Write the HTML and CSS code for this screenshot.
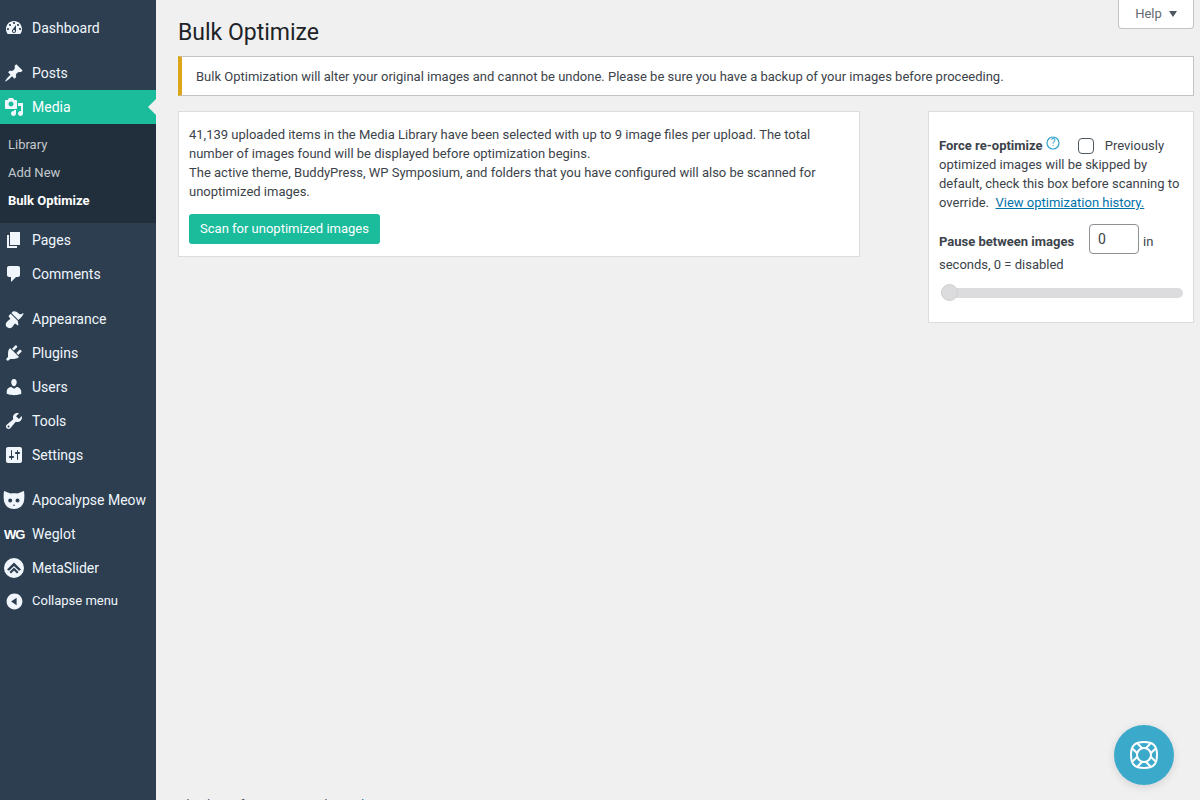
FILE: index.html
```html
<!DOCTYPE html>
<html lang="en">
<head>
<meta charset="utf-8">
<title>Bulk Optimize</title>
<link rel="stylesheet" href="styles.css">
</head>
<body>
<div class="app">
  <nav class="sidebar">
    <ul class="menu">
      <li class="item"><svg class="ico" viewBox="0 0 20 20"><path fill-rule="evenodd" d="M3.76 16h12.48c1.1-1.37 1.76-3.11 1.76-5 0-4.42-3.58-8-8-8s-8 3.58-8 8c0 1.89.66 3.63 1.76 5zM10 4c.55 0 1 .45 1 1s-.45 1-1 1-1-.45-1-1 .45-1 1-1zM6 6c.55 0 1 .45 1 1s-.45 1-1 1-1-.45-1-1 .45-1 1-1zm8 0c.55 0 1 .45 1 1s-.45 1-1 1-1-.45-1-1 .45-1 1-1zm-5.37 5.55L12 7v6c0 1.1-.9 2-2 2s-2-.9-2-2c0-.57.24-1.08.63-1.45zM4 10c.55 0 1 .45 1 1s-.45 1-1 1-1-.45-1-1 .45-1 1-1zm12 0c.55 0 1 .45 1 1s-.45 1-1 1-1-.45-1-1 .45-1 1-1zm-5 3c0-.55-.45-1-1-1s-1 .45-1 1 .45 1 1 1 1-.45 1-1z"/></svg><span>Dashboard</span></li>
      <li class="item sep"><svg class="ico" viewBox="0 0 20 20"><path d="M10.44 3.02l1.82-1.82 6.36 6.35-1.83 1.82c-1.05-.68-2.48-.57-3.41.36l-.75.75c-.92.93-1.04 2.35-.35 3.41l-1.83 1.82-2.41-2.41-2.8 2.79c-.42.42-3.38 2.71-3.8 2.29s1.86-3.39 2.28-3.81l2.79-2.79L4.1 9.36l1.83-1.82c1.05.69 2.48.57 3.4-.36l.75-.75c.93-.92 1.05-2.35.36-3.41z"/></svg><span>Posts</span></li>
      <li class="item current"><svg class="ico" viewBox="0 0 20 20"><path fill-rule="evenodd" d="M13 11V4c0-.55-.45-1-1-1h-1.67L9 1H5L3.67 3H2c-.55 0-1 .45-1 1v7c0 .55.45 1 1 1h10c.55 0 1-.45 1-1zM7 4.5c1.38 0 2.5 1.12 2.5 2.5S8.38 9.5 7 9.5 4.5 8.38 4.5 7 5.62 4.5 7 4.5zM14 6h5v10.5c0 1.38-1.12 2.5-2.5 2.5S14 17.88 14 16.5s1.12-2.5 2.5-2.5c.17 0 .34.02.5.05V9h-3V6zm-4 8.05V13h2v3.5c0 1.38-1.12 2.5-2.5 2.5S7 17.88 7 16.5 8.12 14 9.5 14c.17 0 .34.02.5.05z"/></svg><span>Media</span></li>
      <li class="submenu">
        <a class="subitem">Library</a>
        <a class="subitem">Add New</a>
        <a class="subitem active">Bulk Optimize</a>
      </li>
      <li class="item"><svg class="ico" viewBox="0 0 20 20"><path d="M6 15V2h10v13H6zm-1 1h8v2H3V5h2v11z"/></svg><span>Pages</span></li>
      <li class="item"><svg class="ico" viewBox="0 0 20 20"><path d="M5 2h9c1.1 0 2 .9 2 2v7c0 1.1-.9 2-2 2h-2l-5 5v-5H5c-1.1 0-2-.9-2-2V4c0-1.1.9-2 2-2z"/></svg><span>Comments</span></li>
      <li class="item sep"><svg class="ico" viewBox="0 0 20 20"><path d="M14.48 11.06L7.41 3.99l1.5-1.5c.5-.56 2.3-.47 3.51.32 1.21.8 1.43 1.28 2.91 2.1 1.18.64 2.45.32 3.44-.55.44-.39.94.04.57.77-.78 1.52-2.56 3.93-4.96 5.93zm-.71.71L6.7 4.7 4.93 6.47c-.39.39-.39 1.02 0 1.41l1.06 1.06c.39.39.39 1.03 0 1.42-.6.6-1.43 1.11-2.21 1.69-.35.26-.7.53-1.01.84-1.43 1.43-1.4 3.75.05 5.2 1.44 1.44 3.77 1.48 5.2.05.31-.31.58-.66.84-1.01.58-.78 1.09-1.61 1.69-2.21.39-.39 1.02-.39 1.41 0l1.06 1.06c.39.39 1.02.39 1.41 0z"/></svg><span>Appearance</span></li>
      <li class="item"><svg class="ico" viewBox="0 0 20 20"><path d="M13.11 4.36L9.87 7.6 8 5.73l3.24-3.24c.35-.34 1.05-.2 1.56.32.52.51.66 1.21.31 1.55zm-8 1.77l.91-1.12 9.01 9.01-1.19.84c-.71.71-2.63 1.16-3.82 1.16H6.14L4.9 17.26c-.59.59-1.54.59-2.12 0-.59-.58-.59-1.53 0-2.12l1.24-1.24v-3.88c0-1.13.4-3.19 1.09-3.89zm7.26 3.97l3.24-3.24c.34-.35 1.04-.21 1.55.31.52.51.66 1.21.31 1.55l-3.24 3.25z"/></svg><span>Plugins</span></li>
      <li class="item"><svg class="ico" viewBox="0 0 20 20"><path d="M10 9.25c-2.27 0-2.73-3.44-2.73-3.44C7 4.02 7.82 2 9.97 2c2.16 0 2.98 2.02 2.71 3.81 0 0-.41 3.44-2.68 3.44zm0 2.57L12.72 10c2.39 0 4.52 2.33 4.52 4.53v2.49s-3.65 1.13-7.24 1.13c-3.65 0-7.24-1.13-7.24-1.13v-2.49c0-2.25 1.94-4.48 4.47-4.48z"/></svg><span>Users</span></li>
      <li class="item"><svg class="ico" viewBox="0 0 20 20"><path fill-rule="evenodd" d="M16.68 9.77c-1.34 1.34-3.3 1.67-4.95.99l-5.41 6.52c-.99.99-2.59.99-3.58 0s-.99-2.59 0-3.57l6.52-5.42c-.68-1.65-.35-3.61.99-4.95 1.28-1.28 3.12-1.62 4.72-1.06l-2.89 2.89 2.82 2.82 2.86-2.87c.53 1.58.18 3.39-1.08 4.65zM3.81 16.21c.4.39 1.04.39 1.43 0 .4-.4.4-1.04 0-1.43-.39-.4-1.03-.4-1.43 0-.39.39-.39 1.03 0 1.43z"/></svg><span>Tools</span></li>
      <li class="item"><svg class="ico" viewBox="0 0 20 20"><path fill-rule="evenodd" d="M18 16V4c0-1.1-.9-2-2-2H4c-1.1 0-2 .9-2 2v12c0 1.1.9 2 2 2h12c1.1 0 2-.9 2-2zM8 11h1c.55 0 1 .45 1 1s-.45 1-1 1H8v1.5c0 .28-.22.5-.5.5s-.5-.22-.5-.5V13H6c-.55 0-1-.45-1-1s.45-1 1-1h1V5.5c0-.28.22-.5.5-.5s.5.22.5.5V11zm5-2h-1c-.55 0-1-.45-1-1s.45-1 1-1h1V5.5c0-.28.22-.5.5-.5s.5.22.5.5V7h1c.55 0 1 .45 1 1s-.45 1-1 1h-1v5.5c0 .28-.22.5-.5.5s-.5-.22-.5-.5V9z"/></svg><span>Settings</span></li>
      <li class="item sep"><svg class="ico ico-cat" viewBox="0 0 22 20"><path fill-rule="evenodd" d="M1 1C4 2 6 3 7.500 3.500 9.500 3 12.500 3 14.500 3.500 16 3 18 2 21 1 21.500 5 21.500 8 21 11 20 16 16 19 11 19 6 19 2 16 1 11 .5 8 .5 5 1 1zM7.200 8.500a2 2 0 1 0 0 4 2 2 0 0 0 0-4zM14.500 8.500a2 2 0 1 0 0 4 2 2 0 0 0 0-4zM11 14.500a.8.8 0 1 0 0 1.600.8.8 0 0 0 0-1.600z"/></svg><span>Apocalypse Meow</span></li>
      <li class="item"><span class="wg">WG</span><span>Weglot</span></li>
      <li class="item"><svg class="ico" viewBox="0 0 20 20"><path fill-rule="evenodd" d="M10 0a10 10 0 1 0 0 20A10 10 0 0 0 10 0zM10 4.500l7 7-2 1.300-5-4.800-5 4.800-2-1.300zM10 9.500l4.500 4.500-1.500 1.500-3-3-3 3L5.500 14z"/></svg><span>MetaSlider</span></li>
      <li class="item collapse"><svg class="ico ico-small" viewBox="0 0 20 20"><path fill-rule="evenodd" d="M10 .7C4.870.7.7 4.870.7 10s4.170 9.300 9.300 9.300 9.300-4.170 9.300-9.300S15.130.7 10 .7zM12.500 14.500L6 10l6.500-4.500z"/></svg><span>Collapse menu</span></li>
    </ul>
  </nav>
  <main class="main">
    <a class="help-tab">Help <i class="caret"></i></a>
    <h1 class="title">Bulk Optimize</h1>
    <div class="notice">Bulk Optimization will alter your original images and cannot be undone. Please be sure you have a backup of your images before proceeding.</div>
    <div class="columns">
      <section class="panel panel-main">
        <p class="intro">41,139 uploaded items in the Media Library have been selected with up to 9 image files per upload. The total number of images found will be displayed before optimization begins.<br>The active theme, BuddyPress, WP Symposium, and folders that you have configured will also be scanned for unoptimized images.</p>
        <button class="scan" type="button">Scan for unoptimized images</button>
      </section>
      <aside class="panel panel-side">
        <p class="opt"><b class="label">Force re-optimize</b> <svg class="q" viewBox="0 0 14 14"><circle cx="7" cy="7" r="6" fill="none" stroke="#2ea2cc" stroke-width="1.200"/><text x="7" y="10.300" text-anchor="middle">?</text></svg><span class="check"></span>Previously optimized images will be skipped by default, check this box before scanning to override. &nbsp;<a class="link">View optimization history.</a></p>
        <p class="opt pause"><b class="label">Pause between images</b><span class="num">0</span>in seconds, 0 = disabled</p>
        <div class="slider"><span class="thumb"></span></div>
      </aside>
    </div>
    <footer class="foot">Thank you for creating with <a class="foot-link">WordPress</a>.</footer>
  </main>
</div>
<div class="support"><svg viewBox="0 0 32 32" width="32" height="32"><g fill="none" stroke="#fff" stroke-width="2"><circle cx="16" cy="16" r="7"/><path d="M16 3C20 3 24 4 26 6S29 12 29 16 28 24 26 26 20 29 16 29 8 28 6 26 3 20 3 16 4 8 6 6 12 3 16 3z"/><path transform="translate(16 16)" d="M6.800-1.800L11.300-6.300M1.800-6.800L6.300-11.300M6.800 1.800L11.300 6.300M1.800 6.800L6.300 11.300M-6.800 1.800L-11.300 6.300M-1.800 6.800L-6.300 11.300M-6.800-1.800L-11.300-6.300M-1.800-6.800L-6.300-11.300"/></g></svg></div>
</body>
</html>
```
FILE: styles.css
```css
* { box-sizing: border-box; }
html, body { margin: 0; height: 100%; overflow: hidden; }
body { background: #f0f0f1; font-family: Roboto, "Liberation Sans", sans-serif; font-size: 13px; line-height: 19px; color: #3c434a; }
.app { display: flex; height: 800px; }

.sidebar { width: 156px; flex: none; background: #2c3e50; padding-top: 11px; }
.menu { list-style: none; margin: 0; padding: 0; }
.item { position: relative; display: flex; align-items: center; height: 34px; font-size: 14px; color: #f0f6fc; }
.item.sep { margin-top: 11px; }
.ico { width: 20px; height: 20px; margin-left: 4px; margin-right: 8px; flex: none; fill: #f0f6fc; }
.ico-cat { width: 22px; margin-left: 3px; margin-right: 7px; }
.ico-small { width: 17px; height: 17px; margin-left: 6px; margin-right: 9px; margin-top: 3px; }
.wg { width: 24px; margin-left: 4px; margin-right: 4px; font-family: "Liberation Sans", sans-serif; font-weight: 700; font-size: 13px; letter-spacing: -1px; color: #fff; }
.current { background: #1abc9c; color: #fff; }
.current::after { content: ""; position: absolute; right: 0; top: 50%; margin-top: -8px; border: 8px solid transparent; border-right-color: #f0f0f1; border-left-width: 0; }
.submenu { display: flex; flex-direction: column; height: 99px; padding: 6px 0 9px; background: #212f3c; }
.subitem { display: flex; align-items: center; height: 28px; padding-left: 8px; color: #c4c9cd; }
.subitem.active { color: #fff; font-weight: 700; }
.collapse { font-size: 13px; height: 30px; }

.main { flex: 1; min-width: 0; display: flex; flex-direction: column; position: relative; padding-left: 22px; padding-right: 6px; }
.help-tab { position: absolute; top: -1px; right: 6px; width: 76px; height: 30px; display: flex; align-items: center; justify-content: center; gap: 7px; background: #fff; border: 1px solid #c3c4c7; border-top: none; border-radius: 0 0 4px 4px; color: #646970; }
.caret { width: 0; height: 0; border: 4.500px solid transparent; border-top: 6px solid #50575e; border-bottom: 0; }
.title { margin: 0; padding-top: 18px; height: 56px; font-size: 23px; line-height: 29px; font-weight: 400; color: #1d2327; }
.notice { height: 40px; display: flex; align-items: center; padding-left: 14px; background: #fff; border: 1px solid #c3c4c7; border-left: 4px solid #dba617; }
.columns { display: flex; justify-content: space-between; align-items: flex-start; margin-top: 15px; }
.panel { background: #fff; border: 1px solid #dcdcde; }
.panel-main { width: 682px; height: 146px; padding: 13px 10px; }
.intro { margin: 0; }
.scan { display: block; margin-top: 13px; width: 191px; height: 30px; padding: 0 0 2px; border: 0; border-radius: 3px; background: #1abc9c; color: #fff; font: inherit; }
.panel-side { width: 266px; height: 212px; padding: 24px 10px 0; }
.opt { margin: 0; }
.label { font-weight: 700; }
.q { width: 14px; height: 14px; vertical-align: 0; }
.q text { font-size: 10px; fill: #2ea2cc; font-family: Roboto, sans-serif; }
.check { display: inline-block; width: 16px; height: 16px; margin: 0 11px 0 18px; vertical-align: -4px; background: #fff; border: 1px solid #50575e; border-radius: 4px; }
.link { color: #0073aa; text-decoration: underline; }
.pause { margin-top: 12px; line-height: 23px; }
.num { display: inline-block; width: 50px; height: 30px; line-height: 28px; margin: 0 4px -3px 15px; padding-left: 8px; font-size: 14px; vertical-align: 2px; background: #fff; border: 1px solid #8c8f94; border-radius: 4px; }
.slider { position: relative; height: 10px; margin: 12px 0 0 2px; border-radius: 5px; background: #dcdcde; }
.thumb { position: absolute; left: 0; top: -4px; width: 17px; height: 17px; border-radius: 50%; background: #dcdcde; border: 1px solid #d0d0d0; }
.foot { margin-top: auto; height: 5px; font-style: italic; color: #50575e; }
.foot-link { color: #0073aa; text-decoration: underline; }

.support { position: fixed; left: 1114px; top: 725px; width: 60px; height: 60px; display: flex; align-items: center; justify-content: center; border-radius: 50%; background: #3ba9c9; box-shadow: 0 2px 8px rgba(0,0,0,.12); }
```
